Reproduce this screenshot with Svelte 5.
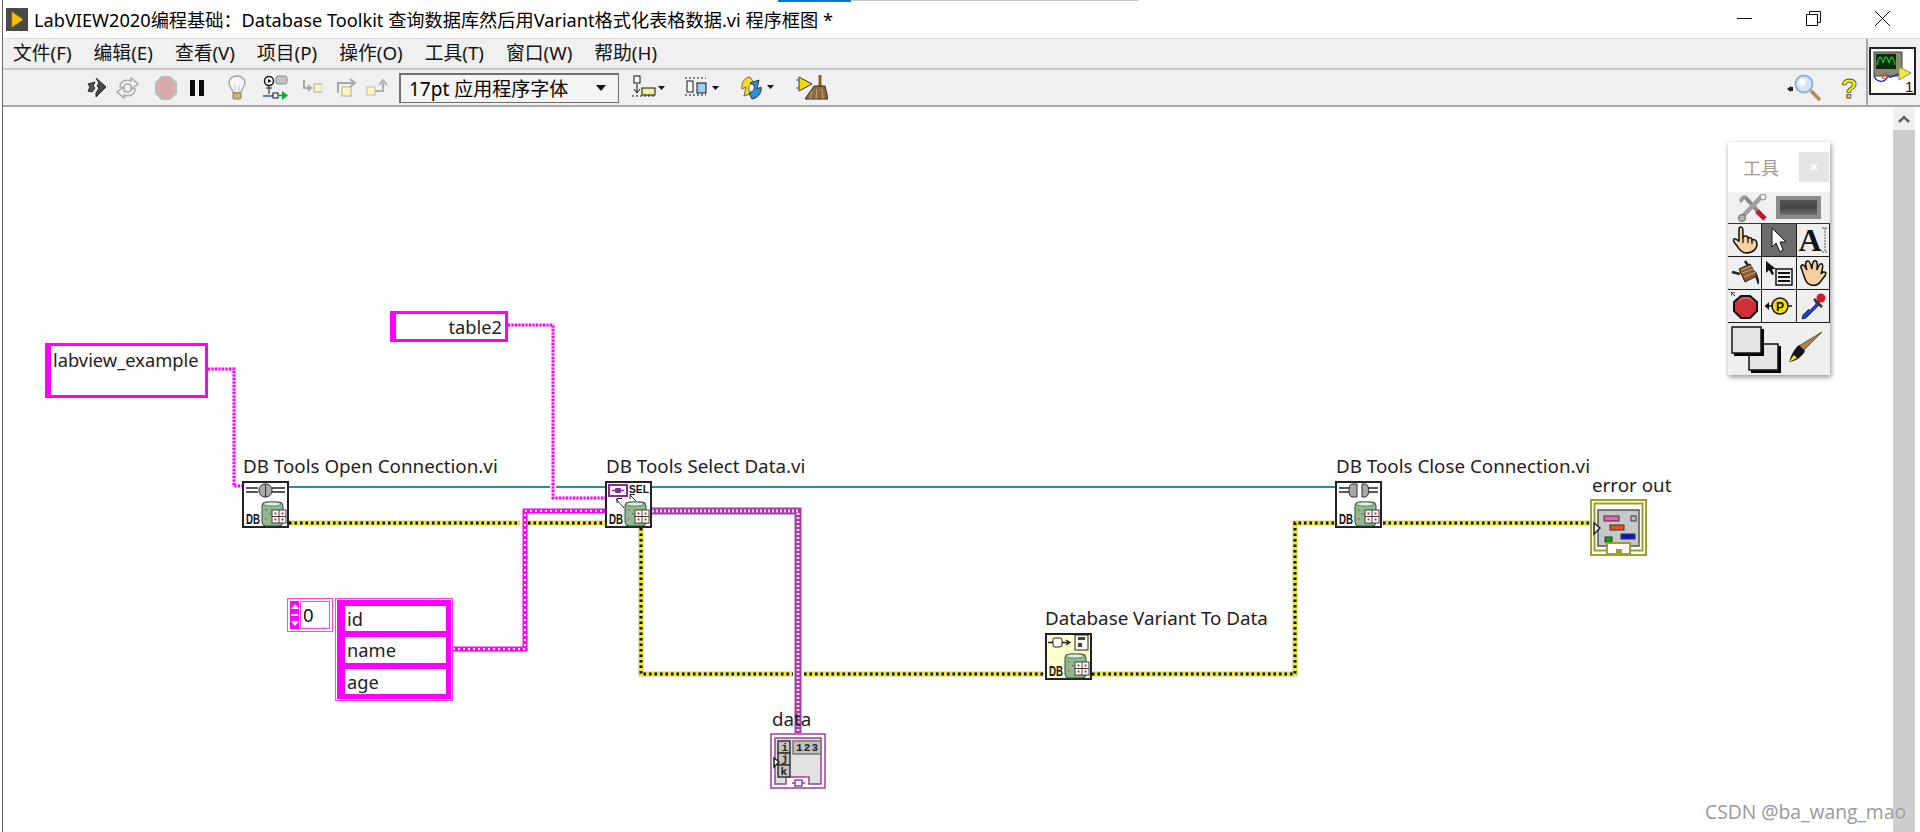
<script>
  const menus = ['文件(F)', '编辑(E)', '查看(V)', '项目(P)', '操作(O)', '工具(T)', '窗口(W)', '帮助(H)'];
  const labels = [
    { t: 'DB Tools Open Connection.vi', x: 243, y: 454 },
    { t: 'DB Tools Select Data.vi', x: 606, y: 454 },
    { t: 'DB Tools Close Connection.vi', x: 1336, y: 454 },
    { t: 'error out', x: 1592, y: 473 },
    { t: 'Database Variant To Data', x: 1045, y: 606 },
    { t: 'data', x: 772, y: 707 }
  ];
  const px = (v) => `${v}px`;
  const errPath = 'M289 523H520M528 523H605M641 528V674H793M804 674H1044M1092 674H1295V523H1335M1383 523H1590';
  const strPath = 'M208 369H234V486H242M508 325H553V498H605';
  const arrPath = 'M453 649H525V511H605';
  const purplePath = 'M652 511H798V733';
</script>

{#snippet db()}
  <rect x="1" y="1" width="45" height="45" fill="none" stroke="#222" stroke-width="2" />
  <text x="4" y="43" class="db" textLength="14" lengthAdjust="spacingAndGlyphs">DB</text>
  <rect x="20" y="21" width="21" height="24" rx="4" fill="#8fb98f" stroke="#2f4f3f" />
  <ellipse cx="30" cy="23" rx="9" ry="2" fill="#dfeedf" stroke="#2f4f3f" stroke-width=".6" />
  <g fill="#d04030"><rect x="23" y="28" width="1.5" height="1.5" /><rect x="27" y="32" width="1.5" height="1.5" /><rect x="23" y="37" width="1.5" height="1.5" /></g>
  <rect x="30" y="29" width="14" height="13" fill="#fff" stroke="#3c3c3c" />
  <path d="M37 29V42M30 35.500H44" stroke="#3c3c3c" />
  <g fill="#e02020"><rect x="32.500" y="31.500" width="2" height="2" /><rect x="39.500" y="31.500" width="2" height="2" /><rect x="32.500" y="37.500" width="2" height="2" /><rect x="39.500" y="37.500" width="2" height="2" /></g>
{/snippet}

{#snippet plug(x)}
  <rect x={x} y="3" width="13" height="13" rx="6" fill="#a8a8a8" stroke="#333" />
{/snippet}

<div class="window">
  <span class="topline blue"></span>
  <span class="topline grey"></span>

  <header class="title">
    <svg class="logo" width="22" height="23" viewBox="0 0 22 23">
      <rect width="22" height="23" fill="#4a4a4a" />
      <path d="M6 4L17 11.500L6 19Z" fill="#f4c400" stroke="#c89600" />
    </svg>
    <span class="title-text">LabVIEW2020编程基础&#xFF1A;Database Toolkit 查询数据库然后用Variant格式化表格数据.vi 程序框图 *</span>
    <div class="controls">
      <svg width="15" height="15" viewBox="0 0 15 15"><path d="M0 7.500H15" stroke="#111" /></svg>
      <svg width="15" height="15" viewBox="0 0 15 15" fill="none" stroke="#111"><path d="M.5 3.500H11.500V14.500H.5ZM3.500 3.500V.5H14.500V11.500H11.500" /></svg>
      <svg width="15" height="15" viewBox="0 0 15 15"><path d="M0 0L15 15M15 0L0 15" stroke="#111" /></svg>
    </div>
  </header>

  <div class="chrome">
    <div class="bars">
      <nav class="menu">
        {#each menus as m}<span>{m}</span>{/each}
      </nav>
      <div class="toolbar">
        <svg class="ic run" width="20" height="22" viewBox="0 0 20 22"><path d="M9 1L19 10L9 20V16L12 11L10 9L12 6Z" fill="#4a4a4a" stroke="#222" /><path d="M1 7L8 5L6 9L8 11L5 15L1 14L3 10Z" fill="#555" stroke="#222" /></svg>
        <svg class="ic cont" width="23" height="22" viewBox="0 0 23 22" fill="#f4f4f4" stroke="#aaa" stroke-width="1.500"><path d="M4 10C4 4 10 2 15 4V1L22 7L15 12V8C11 6 8 7 7 11Z" /><path d="M19 12C19 18 13 20 8 18V21L1 15L8 10V14C12 16 15 15 16 11Z" /></svg>
        <svg class="ic stop" width="22" height="24" viewBox="0 0 22 24"><path d="M7 1H15L21 7V17L15 23H7L1 17V7Z" fill="#d9abab" stroke="#bcbcbc" stroke-width="2" /></svg>
        <svg class="ic pause" width="15" height="16" viewBox="0 0 15 16"><path d="M0 0H5V16H0ZM9 0H14V16H9Z" fill="#0a0a0a" /></svg>
        <svg class="ic bulb" width="18" height="26" viewBox="0 0 18 26"><path d="M9 1C3 1 1 5 1 8C1 12 5 14 5 18H13C13 14 17 12 17 8C17 5 15 1 9 1Z" fill="#f6f6f6" stroke="#9a9a9a" stroke-width="1.300" /><path d="M7 17V10M11 17V10" stroke="#c4c4c4" /><rect x="5" y="18" width="8" height="6" rx="1" fill="#cbb27d" stroke="#8a7a50" /></svg>
        <svg class="ic probe" width="25" height="26" viewBox="0 0 25 26"><circle cx="6" cy="6" r="4.500" fill="#fff" stroke="#111" stroke-width="1.500" /><path d="M5 4L8.500 6L5 8Z" fill="#111" /><path d="M6 11V19M3 13H9" stroke="#111" /><rect x="13" y="1" width="11" height="8" rx="2" fill="#c4c4c4" stroke="#888" /><path d="M0 21H10" stroke="#2050c8" stroke-width="1.500" /><rect x="10" y="18" width="5" height="5" fill="#fff" stroke="#111" /><path d="M15 20.500H20" stroke="#009a30" stroke-width="1.500" /><path d="M19 16L25 20.500L19 25Z" fill="#00b030" /></svg>
        <svg class="ic into" width="20" height="18" viewBox="0 0 20 18"><path d="M2 1V9H9M6 6L9 9L6 12" fill="none" stroke="#a8a8a8" stroke-width="2" /><rect x="12" y="5" width="8" height="8" fill="#fafabe" stroke="#aaa" /></svg>
        <svg class="ic over" width="20" height="20" viewBox="0 0 20 20"><path d="M1 15V5H16M13 1L18 5L13 9" fill="none" stroke="#a8a8a8" stroke-width="2" /><rect x="5" y="9" width="9" height="9" fill="#fafabe" stroke="#aaa" /></svg>
        <svg class="ic out" width="22" height="20" viewBox="0 0 22 20"><rect x="1" y="9" width="8" height="8" fill="#fafabe" stroke="#bbb" /><path d="M9 13H17V4M13 7L17 2L21 7" fill="none" stroke="#b0b0b0" stroke-width="2" /></svg>
        <div class="fontbox"><span>17pt 应用程序字体</span><i></i></div>
        <svg class="ic align" width="34" height="26" viewBox="0 0 34 26"><rect x="3" y="1" width="6" height="7" fill="#fff" stroke="#111" /><path d="M6 9V17M3 14L6 18L9 14" stroke="#111" fill="none" /><path d="M1 21H24" stroke="#111" stroke-dasharray="2 2" /><rect x="11" y="13" width="13" height="7" fill="#f5f0a0" stroke="#111" /><path d="M27 11H34L30.500 15Z" fill="#111" /></svg>
        <svg class="ic dist" width="36" height="26" viewBox="0 0 36 26"><path d="M1 3H22M1 20H22" stroke="#111" stroke-dasharray="2 2" /><rect x="3" y="6" width="6" height="11" fill="#fff" stroke="#111" /><rect x="13" y="8" width="9" height="10" fill="#9fd0ef" stroke="#111" /><path d="M28 11H35L31.500 15Z" fill="#111" /></svg>
        <svg class="ic reorder" width="35" height="26" viewBox="0 0 35 26"><path d="M10 2C4 3 1 8 2 14L6 12L4 21L13 18L9 16C8 11 10 9 14 8Z" fill="#f0e020" stroke="#666" /><path d="M12 24C18 23 22 18 21 12L17 14L19 5L10 8L14 10C15 15 13 17 9 18Z" fill="#2f8fd0" stroke="#333" /><path d="M27 10H34L30.500 14Z" fill="#111" /></svg>
        <svg class="ic clean" width="32" height="26" viewBox="0 0 32 26"><path d="M3 2L16 9L3 16Z" fill="#f4d800" stroke="#333" /><path d="M0 5H3M0 13H3" stroke="#2050c8" /><path d="M24 0V11" stroke="#8a5c28" stroke-width="3" /><path d="M18 11H29L32 24H9Z" fill="#8a6a40" stroke="#3c2a10" /><path d="M16 16L14 24M21 14L20 24M26 14L27 24" stroke="#c8a878" /></svg>

        <div class="right">
          <svg width="36" height="28" viewBox="0 0 36 28"><path d="M0 15L4 12V18Z" fill="#222" /><rect x="4" y="13" width="2" height="4" fill="#222" /><circle cx="17" cy="10" r="8.500" fill="#cfe8fb" stroke="#9ab0c8" stroke-width="2" /><circle cx="15" cy="8" r="3.500" fill="#fff" /><path d="M24 17L33 26" stroke="#b08a60" stroke-width="3.500" /></svg>
          <svg width="22" height="32" viewBox="0 0 22 32"><text x="3" y="26" class="help">?</text></svg>
        </div>
      </div>
    </div>
    <aside class="vi-icon">
      <svg width="47" height="48" viewBox="0 0 47 48">
        <rect x="1" y="1" width="45" height="46" fill="#fff" stroke="#222" stroke-width="2" />
        <rect x="5" y="5" width="28" height="24" fill="#8a8a70" stroke="#444" />
        <rect x="7" y="7" width="20" height="15" fill="#0c2a0c" />
        <path d="M8 18C10 8 12 8 14 16C16 8 18 8 20 16C22 8 24 8 26 18" fill="none" stroke="#10c030" stroke-width="1.300" />
        <path d="M5 29C8 36 16 36 18 30M18 28C22 34 26 26 32 27" fill="none" stroke="#1020c0" stroke-width="1.300" />
        <circle cx="16" cy="29" r="3" fill="none" stroke="#e04030" />
        <path d="M28 26L42 26" stroke="#e04030" />
        <path d="M30 20L42 26L30 33Z" fill="#f4ec20" stroke="#888" />
        <text x="36" y="45" class="one">1</text>
      </svg>
    </aside>
  </div>

  <main class="canvas">
    <div class="scrollbar">
      <div class="up"><svg width="12" height="8" viewBox="0 0 12 8"><path d="M1 7L6 2L11 7" fill="none" stroke="#606060" stroke-width="2.500" /></svg></div>
      <div class="thumb"></div>
    </div>

    <div class="diagram">
      <svg class="wires" width="1920" height="832" viewBox="0 0 1920 832" fill="none">
        <path d="M289 487H550M556 487H605M652 487H1335" stroke="#2a9090" stroke-width="2" />
        <path d={errPath} stroke="#cfcf80" stroke-width="5" />
        <path d={errPath} stroke="#f6f000" stroke-width="3" />
        <path d={errPath} stroke="#111" stroke-width="3" stroke-dasharray="2.500 3" />
        <path d={purplePath} stroke="#a23ea2" stroke-width="7" />
        <path d={purplePath} stroke="#ecc4ec" stroke-width="3" stroke-dasharray="2 2" />
        <path d={arrPath} stroke="#ff00ff" stroke-width="5" />
        <path d={arrPath} stroke="#fff" stroke-width="2" stroke-dasharray="2 3" />
        <path d={strPath} stroke="#ffb8ff" stroke-width="3" />
        <path d={strPath} stroke="#ff00ff" stroke-width="3" stroke-dasharray="2 1.500" />

        <g transform="translate(242 481)">
          <rect width="47" height="47" fill="#fff" />
          <path d="M4 7H16M4 11H16M30 7H43M30 11H43" stroke="#222" stroke-width="1.500" />
          {@render plug(17)}
          <path d="M23.500 3V16" stroke="#333" />
          {@render db()}
        </g>
        <g transform="translate(605 481)">
          <rect width="47" height="47" fill="#fff" />
          <rect x="4" y="4" width="18" height="11" fill="#fff" stroke="#8a2a8a" stroke-width="2" />
          <path d="M7 9.500H19" stroke="#8a2a8a" stroke-width="1.500" /><rect x="10" y="7" width="6" height="5" rx="1" fill="#8a2a8a" />
          <text x="24" y="12" class="sel" textLength="20" lengthAdjust="spacingAndGlyphs">SEL</text>
          <path d="M19 27L11 18M12 22V17.500H17M31 20L25 14M25 18V13.500H30" stroke="#222" fill="none" />
          {@render db()}
        </g>
        <g transform="translate(1335 481)">
          <rect width="47" height="47" fill="#fff" />
          <path d="M4 7H15M4 11H15M33 7H43M33 11H43" stroke="#222" stroke-width="1.500" />
          <path d="M22 3H17C13 3 13 16 17 16H22Z" fill="#a8a8a8" stroke="#333" />
          <path d="M27 3H30C35 3 35 16 30 16H27Z" fill="#a8a8a8" stroke="#333" />
          {@render db()}
        </g>
        <g transform="translate(1045 633)">
          <rect width="47" height="47" fill="#ffffcf" />
          <rect x="8" y="5" width="9" height="9" rx="2" fill="#fff" stroke="#222" />
          <path d="M3 9.500H8M17 9.500H24M21 7L25 9.500L21 12" stroke="#222" fill="none" stroke-width="1.300" />
          <rect x="30" y="2" width="13" height="15" fill="#fff" stroke="#222" />
          <rect x="33" y="4" width="7" height="3" fill="#444" /><rect x="33" y="10" width="4" height="4" fill="#444" />
          {@render db()}
        </g>
        <g transform="translate(1590 499)">
          <rect x="1" y="1" width="55" height="55" fill="#fff" stroke="#a0a020" stroke-width="2" />
          <rect x="4.500" y="4.500" width="48" height="47" fill="#fff" stroke="#a0a020" stroke-width="2" />
          <rect x="8" y="11" width="41" height="36" fill="#c8c8c8" stroke="#555" stroke-width="1.500" />
          <rect x="14" y="17" width="15" height="5" fill="#f060b0" stroke="#333" />
          <rect x="41" y="17" width="5" height="5" fill="#bbb" stroke="#333" />
          <rect x="20" y="26" width="14" height="5" fill="#f05020" stroke="#333" />
          <rect x="15" y="38" width="7" height="5" fill="#10a020" stroke="#333" />
          <rect x="31" y="35" width="14" height="5" fill="#0818d8" stroke="#333" />
          <path d="M17 44H40V55H17Z" fill="#fff" stroke="#a0a020" stroke-width="2" />
          <rect x="26" y="50" width="6" height="5" fill="#a0a020" />
          <path d="M4 24L10 29L4 35Z" fill="#fff" stroke="#222" stroke-width="1.500" />
        </g>
        <g transform="translate(770 733)">
          <rect x="1" y="1" width="54" height="54" fill="#fff" stroke="#a03ca0" stroke-width="1.500" />
          <path d="M5 5H51V51H39V44H16V51H5Z" fill="#e2e2e2" stroke="#a03ca0" stroke-width="1.500" />
          <g fill="#c4c4c4" stroke="#333" stroke-width="1.500"><rect x="8" y="8" width="12" height="12" /><rect x="8" y="20" width="12" height="12" /><rect x="8" y="32" width="12" height="12" /></g>
          <text x="11.500" y="18" class="ijk">i</text><text x="11.500" y="29" class="ijk">j</text><text x="10.500" y="42" class="ijk">k</text>
          <rect x="23" y="8" width="28" height="13" fill="#c0c0c0" stroke="#777" stroke-width="1.500" />
          <text x="26" y="18" class="ijk" textLength="22">123</text>
          <path d="M4 25L9 29L4 34Z" fill="#fff" stroke="#222" stroke-width="1.500" />
          <path d="M22 50H25M32 50H35" stroke="#a03ca0" stroke-width="1.500" />
          <rect x="25" y="47" width="7" height="6" fill="#fff" stroke="#a03ca0" stroke-width="1.500" />
        </g>
      </svg>

      {#each labels as l}
        <span class="lbl" style:left={px(l.x)} style:top={px(l.y)}>{l.t}</span>
      {/each}

      <div class="str db-name">labview_example</div>
      <div class="str tbl">table2</div>

      <div class="idx">
        <div class="spin"><b></b><u></u><b class="dn"></b></div>
        <span>0</span>
      </div>
      <div class="arr">
        <div class="cell">id</div>
        <div class="cell">name</div>
        <div class="cell">age</div>
      </div>
    </div>

    <div class="watermark">CSDN @ba_wang_mao</div>

    <section class="palette">
      <div class="pal-title"><span>工具</span><button aria-label="close"><svg width="8" height="8" viewBox="0 0 8 8"><path d="M1 1L7 7M7 1L1 7" stroke="#fff" stroke-width="1.800" /></svg></button></div>
      <div class="pal-auto">
        <svg width="30" height="28" viewBox="0 0 30 28">
          <path d="M7 3L26 24" stroke="#888" stroke-width="4" /><path d="M19 17L27 25" stroke="#c01830" stroke-width="5" />
          <path d="M24 2L5 22" stroke="#a0a0a0" stroke-width="4.500" /><path d="M2 6L6 2M8 2L2 8" stroke="#999" stroke-width="2.500" /><circle cx="4" cy="24" r="3.500" fill="#b4b4b4" stroke="#666" /><circle cx="25" cy="3" r="3" fill="#eee" stroke="#888" />
        </svg>
        <div class="led"><i></i></div>
      </div>
      <div class="tools">
        <div class="t">
          <svg width="28" height="28" viewBox="0 0 28 28"><path d="M10 1C12 1 12 3 12 11C14 9 17 10 17 12C19 11 21 12 21 14C23 13 26 14 26 18C26 23 22 27 15 27C10 27 8 23 6 20C4 17 1 15 3 13C5 12 7 15 8 15V3C8 2 9 1 10 1Z" fill="#f8cfa0" stroke="#111" stroke-width="1.500" /><path d="M12 11V17M17 12V17M21 14V18" stroke="#111" stroke-width="1.300" /></svg>
        </div>
        <div class="t on">
          <svg width="20" height="28" viewBox="0 0 20 28"><path d="M3 2V21L7 17L11 26L14 24L11 16H17Z" fill="#fff" stroke="#111" /></svg>
        </div>
        <div class="t a"><span>A</span><svg width="6" height="26" viewBox="0 0 6 26"><path d="M0 1H6M3 1V25M0 25H6" stroke="#555" stroke-dasharray="2 1" fill="none" /></svg></div>
        <div class="t">
          <svg width="28" height="26" viewBox="0 0 28 26"><path d="M1 12L9 14M24 12L28 24M14 1L18 7" stroke="#222" stroke-width="2.500" /><path d="M8 9L19 4L26 16L14 22Z" fill="#8a5a30" stroke="#222" /><path d="M10 10L21 6M11 13L23 9M13 17L25 12" stroke="#d0a878" /></svg>
        </div>
        <div class="t">
          <svg width="28" height="26" viewBox="0 0 28 26"><path d="M1 1V13L4 10L7 15L9 14L7 9H11Z" fill="#111" /><rect x="11" y="9" width="16" height="16" fill="#eee" stroke="#111" stroke-width="1.500" /><path d="M13 13H25M13 17H25M13 21H25" stroke="#111" stroke-width="2" /></svg>
        </div>
        <div class="t">
          <svg width="28" height="28" viewBox="0 0 28 28"><path d="M4 14C2 9 1 7 3 6C5 5 6 8 8 11C6 6 6 2 9 2C11 2 12 6 13 10C13 5 14 1 17 2C19 3 18 7 18 11C19 7 21 4 23 5C25 7 23 11 22 15C23 13 26 12 27 14C27 17 24 19 22 22C20 25 16 27 12 26C7 25 6 20 4 14Z" fill="#f8cfa0" stroke="#111" stroke-width="1.500" /></svg>
        </div>
        <div class="t">
          <svg width="28" height="28" viewBox="0 0 28 28"><path d="M10 4H19L26 10V19L19 26H10L3 19V10Z" fill="#cf3038" stroke="#111" stroke-width="2" /><path d="M8 9L12 6H18L22 9" stroke="#e88" fill="none" /><path d="M0 0L4 4M0 4V0H4" stroke="#111" fill="none" /></svg>
        </div>
        <div class="t">
          <svg width="28" height="20" viewBox="0 0 28 20"><path d="M0 10H27" stroke="#111" stroke-width="1.500" /><path d="M4 6L0 10L4 14Z" fill="#111" /><circle cx="15" cy="10" r="8" fill="#f4e000" stroke="#111" stroke-width="1.500" /><text x="11" y="15" class="p">P</text></svg>
        </div>
        <div class="t">
          <svg width="28" height="28" viewBox="0 0 28 28"><path d="M4 23L18 9L21 12L7 26L3 27Z" fill="#2040c8" stroke="#333" /><path d="M10 17L16 11" stroke="#fff" stroke-width="2" /><circle cx="22" cy="6" r="4.500" fill="#d01830" /><path d="M15 7L23 15" stroke="#333" stroke-width="2.500" /></svg>
        </div>
      </div>
      <div class="colors">
        <svg width="100" height="50" viewBox="0 0 100 50">
          <rect x="23" y="22" width="30" height="27" fill="#000" />
          <rect x="21" y="20" width="29" height="26" fill="#e4e4e4" stroke="#111" stroke-width="1.500" />
          <rect x="6" y="5" width="30" height="27" fill="#000" />
          <rect x="4" y="3" width="29" height="26" fill="#e4e4e4" stroke="#111" stroke-width="1.500" />
          <path d="M94 8L76 26L71 22Z" fill="#b08450" stroke="#6a4c2c" />
          <path d="M77 27L71 21C67 24 63 31 61 38C68 37 74 33 77 27Z" fill="#151515" />
          <path d="M61 38L66 31L69 34Z" fill="#f4ec20" />
        </svg>
      </div>
    </section>
  </main>
</div>

<style>
  :global(body) { margin: 0; background: #fff; overflow: hidden; }

  .window {
    position: relative;
    width: 1917px;
    height: 832px;
    margin-left: 2px;
    border-left: 1px solid #666;
    display: flex;
    flex-direction: column;
    font-family: "Noto Sans", "Noto Sans CJK SC", sans-serif;
    color: #111;
    overflow: hidden;
  }

  .topline { position: absolute; top: 0; height: 2px; }
  .blue { left: 775px; width: 73px; background: #0078d7; }
  .grey { left: 848px; width: 288px; height: 1px; background: #c8c8c8; }

  .title { height: 38px; flex: none; display: flex; align-items: center; padding-left: 3px; box-sizing: border-box; }
  .logo { flex: none; }
  .title-text { margin-left: 6px; font-size: 18.200px; white-space: nowrap; color: #000; }
  .controls { margin-left: auto; display: flex; gap: 54px; margin-right: 30px; align-items: center; margin-top: -1px; }

  .chrome { height: 69px; flex: none; display: flex; background: #f0f0f0; border-top: 1px solid #dcdcdc; box-sizing: border-box; border-bottom: 2px solid #a8a8a8; }
  .bars { flex: 1; display: flex; flex-direction: column; border-right: 2px solid #a4a4a4; }
  .menu { height: 26px; padding: 0 0 3px 10px; display: flex; align-items: center; gap: 22px; font-size: 18.800px; border-bottom: 2px solid #c8c8c8; box-sizing: content-box; }
  .toolbar { flex: 1; min-height: 0; display: flex; align-items: center; padding-left: 84px; }
  .ic { flex: none; }
  .cont { margin-left: 9px; }
  .stop { margin-left: 16px; }
  .pause { margin-left: 13px; }
  .bulb { margin-left: 23px; }
  .probe { margin-left: 17px; }
  .into { margin-left: 14px; }
  .over { margin-left: 15px; }
  .out { margin-left: 9px; }
  .align { margin-left: 12px; }
  .dist { margin-left: 19px; }
  .reorder { margin-left: 20px; }
  .clean { margin-left: 21px; }

  .fontbox { margin-left: 11px; width: 220px; height: 30px; box-sizing: border-box; border: 1px solid #6e6e6e; border-top-width: 2px; border-left-width: 2px; background: #f4f4f4; display: flex; align-items: center; padding: 0 12px 0 8px; font-size: 19px; color: #000; }
  .fontbox span { flex: 1; white-space: nowrap; }
  .fontbox i { width: 0; height: 0; border: 5px solid transparent; border-top: 6px solid #111; border-bottom: 0; }

  .right { margin-left: auto; display: flex; align-items: center; gap: 15px; margin-right: 6px; height: 32px; }
  .right svg { display: block; }
  .help { font: 700 27px "Liberation Sans", sans-serif; fill: #f4ec10; stroke: #444; stroke-width: .8px; }

  .vi-icon { width: 52px; flex: none; padding: 8px 0 0 1px; box-sizing: border-box; }
  .vi-icon svg { display: block; }
  .one { font: 15px "Liberation Sans", sans-serif; fill: #111; }

  .canvas { flex: 1; position: relative; overflow: hidden; background: #fff; }

  .scrollbar { position: absolute; right: 5px; top: 0; bottom: 0; width: 22px; display: flex; flex-direction: column; }
  .up { height: 23px; background: #f0f0f0; display: flex; align-items: center; justify-content: center; flex: none; }
  .thumb { flex: 1; background: #cdcdcd; }

  .diagram { position: absolute; left: -3px; top: -107px; width: 1920px; height: 832px; }
  .wires { position: absolute; inset: 0; }

  .db { font: 700 15px "Liberation Sans", sans-serif; fill: #111; }
  .sel { font: 700 11px "Liberation Sans", sans-serif; fill: #111; }
  .ijk { font: 700 11px "Liberation Mono", monospace; fill: #222; }
  .p { font: 700 12px "Liberation Sans", sans-serif; fill: #111; }

  .lbl { position: absolute; font-size: 18.800px; line-height: 24px; white-space: nowrap; color: #222; }

  .str { position: absolute; box-sizing: border-box; background: #fff; border: 3px solid #ff00ff; font-size: 18.300px; line-height: 24px; color: #222; }
  .db-name { left: 45px; top: 343px; width: 163px; height: 55px; border-left-width: 6px; padding: 2px 0 0 2px; }
  .tbl { left: 390px; top: 311px; width: 118px; height: 31px; border-left-width: 6px; text-align: right; padding: 1px 3px 0 0; }

  .idx { position: absolute; left: 287px; top: 598px; width: 46px; height: 34px; box-sizing: border-box; border: 1px solid #ff40ff; padding: 2px; display: flex; background: #fff; }
  .idx span { flex: 1; border: 1px solid #ff40ff; font-size: 18.500px; line-height: 26px; padding-left: 2px; margin-left: 1px; }
  .spin { width: 9px; background: #ff00ff; display: flex; flex-direction: column; padding: 3px 0; box-sizing: border-box; align-items: center; justify-content: space-between; }
  .spin b { width: 0; height: 0; border: 4px solid transparent; border-bottom: 5px solid #fff; border-top: 0; }
  .spin u { width: 7px; height: 2px; background: #fff; }
  .spin .dn { border-top: 5px solid #fff; border-bottom: 0; }

  .arr { position: absolute; left: 335px; top: 598px; width: 118px; height: 103px; box-sizing: border-box; border: 1px solid #ff40ff; padding: 7px 6px 6px 9px; background: #ff00ff; box-shadow: inset 0 0 0 1px #fff, inset 0 0 0 2px #ff00ff; display: flex; flex-direction: column; gap: 6px; }
  .cell { height: 26px; background: #fff; font-size: 18.300px; line-height: 25px; padding-left: 2px; color: #222; }

  .watermark { position: absolute; left: 1702px; top: 692px; font: 19.300px/26px "Open Sans", sans-serif; color: #999; text-shadow: 0 1px 1px rgba(255,255,255,.6); white-space: nowrap; }

  .palette { position: absolute; left: 1725px; top: 35px; width: 102px; background: #f0f0f0; box-shadow: 1px 2px 5px rgba(0,0,0,.45); }
  .pal-title { height: 50px; background: #fff; display: flex; align-items: center; justify-content: space-between; padding-left: 15px; }
  .pal-title span { font-size: 18px; color: #a29a92; }
  .pal-title button { width: 30px; height: 30px; margin-right: 1px; background: #e4e4e4; border: 0; padding: 0; display: flex; align-items: center; justify-content: center; }
  .pal-auto { height: 31px; display: flex; align-items: center; padding-left: 10px; gap: 8px; border-bottom: 1px solid #333; }
  .led { width: 45px; height: 23px; background: #8c8c8c; padding: 4px; box-sizing: border-box; }
  .led i { display: block; height: 100%; background: linear-gradient(#555, #444 50%, #707070); }
  .tools { display: grid; grid-template-columns: 34px 35px 33px; grid-auto-rows: 33px; background: #1c1c1c; gap: 0; }
  .t { display: flex; align-items: center; justify-content: center; background: #efefef; margin: 0 1px 1px 0; }
  .t.on { background: #6c6c6c; }
  .t.a span { font: 700 32px "Liberation Serif", serif; color: #111; line-height: 1; }
  .colors { height: 52px; display: flex; align-items: center; background: #efefef; }
</style>
